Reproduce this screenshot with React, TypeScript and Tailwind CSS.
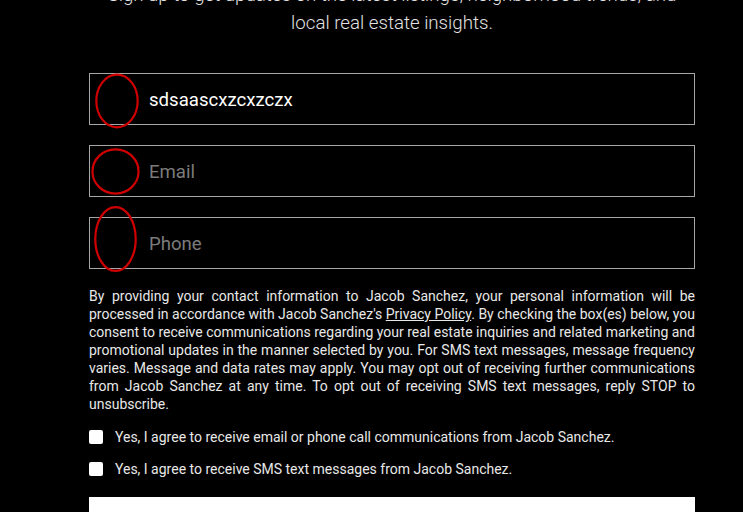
import type {FC} from 'react';

const Ring: FC<{className: string}> = ({className}) => (
    <svg className={`absolute pointer-events-none ${className}`} viewBox="0 0 100 100" preserveAspectRatio="none">
        <ellipse cx="50" cy="50" rx="47" ry="47" fill="none" stroke="#d00000" strokeWidth="2.2" vectorEffect="non-scaling-stroke"/>
    </svg>
);

const Field: FC<{value?: string; placeholder: string; ring: string}> = ({value, placeholder, ring}) => (
    <div className="relative h-[52px] border border-[#a6a6a6] flex items-center pl-[59px] pt-[3px]">
        {value ? (
            <span className="text-[18.6px] text-white">{value}</span>
        ) : (
            <span className="text-[18.6px] text-[#7c7c7c]">{placeholder}</span>
        )}
        <Ring className={ring}/>
    </div>
);

const Consent: FC<{children: string}> = ({children}) => (
    <label className="flex items-center gap-[12px] leading-[18px]">
        <span className="w-[14px] h-[14px] rounded-[2px] bg-white shrink-0"/>
        {children}
    </label>
);

const App: FC = () => {
    return (
        <div className="min-h-[512px] h-[512px] overflow-hidden bg-black font-['Roboto',sans-serif]">
            <div className="ml-[89px] w-[606px]">
                <p className="mt-[-19px] text-center text-[18.7px] leading-[28px] font-light text-[#e2e2e2]">
                    Sign up to get updates on the latest listings, neighborhood trends, and
                    <br/>local real estate insights.
                </p>

                <div className="mt-[36px] flex flex-col gap-[20px]">
                    <Field value="sdsaascxzcxzczx" placeholder="Name" ring="left-[5px] -top-[1px] w-[44px] h-[56px]"/>
                    <Field placeholder="Email" ring="left-[1px] top-[2px] w-[49px] h-[47px]"/>
                    <Field placeholder="Phone" ring="left-[4px] -top-[13px] w-[43px] h-[68px]"/>
                </div>

                <div className="text-[14px] text-[#e8e8e8]">
                    <p className="mt-[18px] leading-[18px] text-justify">
                        By providing your contact information to Jacob Sanchez, your personal information will be processed in accordance with Jacob Sanchez's <span className="underline">Privacy Policy</span>. By checking the box(es) below, you consent to receive communications regarding your real estate inquiries and related marketing and promotional updates in the manner selected by you. For SMS text messages, message frequency varies. Message and data rates may apply. You may opt out of receiving further communications from Jacob Sanchez at any time. To opt out of receiving SMS text messages, reply STOP to unsubscribe.
                    </p>

                    <div className="mt-[15px] flex flex-col gap-[14px]">
                        <Consent>Yes, I agree to receive email or phone call communications from Jacob Sanchez.</Consent>
                        <Consent>Yes, I agree to receive SMS text messages from Jacob Sanchez.</Consent>
                    </div>
                </div>

                <div className="mt-[19px] h-[40px] bg-white"/>
            </div>
        </div>
    );
};

export default App;
